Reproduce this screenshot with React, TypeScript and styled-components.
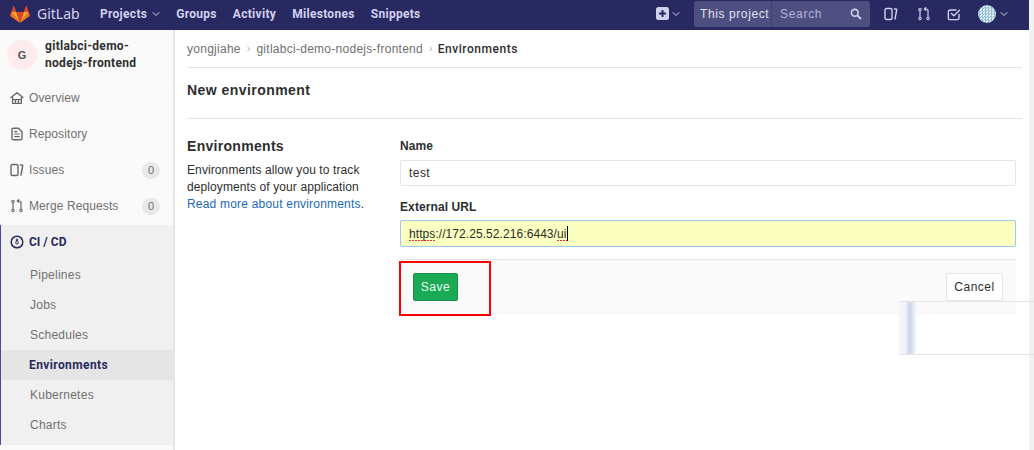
import React from "react";
import styled, { createGlobalStyle } from "styled-components";

const Global = createGlobalStyle`
  html, body { margin: 0; padding: 0; background: #fff; overflow: hidden; }
  body { font-family: "Liberation Sans", Arial, sans-serif; font-size: 12px; color: #2e2e2e; }
  * { box-sizing: border-box; }
`;

const Page = styled.div`
  position: relative;
  width: 1034px;
  height: 450px;
  overflow: hidden;
`;

const TopBar = styled.header`
  display: flex;
  align-items: center;
  height: 30px;
  padding: 0 5px 3px 10px;
  background: #292961;
`;

const Brand = styled.div`
  display: flex;
  align-items: center;
  gap: 7px;
  width: 90px;
  color: #d1d1f0;
  font-family: "Noto Sans", sans-serif;
  font-size: 14px;
`;

const NavItem = styled.span`
  display: inline-flex;
  align-items: center;
  gap: 5px;
  margin-right: 16px;
  color: #d1d1f0;
  font-family: Roboto, sans-serif;
  font-size: 12px;
  font-weight: 700;
  letter-spacing: 0.3px;
`;

const Spacer = styled.div`
  flex: 1;
`;

const SearchBox = styled.div`
  display: flex;
  width: 176px;
  height: 26px;
  margin: 0 14px;
  border-radius: 3px;
  background: #4e4e80;
  color: #d1d1f0;
  font-size: 12px;
`;

const Scope = styled.div`
  display: flex;
  align-items: center;
  width: 78px;
  padding-left: 6px;
  border-right: 1px solid #3e3e74;
  letter-spacing: 0.6px;
  color: #e1e1f5;
`;

const SearchField = styled.div`
  display: flex;
  flex: 1;
  align-items: center;
  justify-content: space-between;
  padding: 0 8px;
  letter-spacing: 0.7px;
  color: #b5b5d8;
`;

const BarIcon = styled.span<{ $after?: number; $before?: number }>`
  display: inline-flex;
  margin-left: ${(p) => p.$before ?? 0}px;
  margin-right: ${(p) => p.$after ?? 0}px;
  color: #d1d1f0;
`;

const Avatar = styled.span`
  width: 18px;
  height: 18px;
  border-radius: 50%;
  background: repeating-conic-gradient(#8fc0d6 0 25%, #e4eef3 0 50%) 0 0 / 3px 3px;
`;

const Body = styled.div`
  display: flex;
  height: 420px;
`;

const Side = styled.aside`
  display: flex;
  flex-direction: column;
  flex: none;
  width: 175px;
  border-right: 2px solid #e5e5e5;
  background: #fafafa;
`;

const ProjectHead = styled.div`
  display: flex;
  align-items: center;
  gap: 8px;
  height: 50px;
  padding: 0 7px;
`;

const ProjectBadge = styled.div`
  display: flex;
  flex: none;
  align-items: center;
  justify-content: center;
  width: 30px;
  height: 30px;
  border-radius: 50%;
  background: #ffebee;
  color: #555;
  font-size: 11px;
  font-weight: 700;
`;

const ProjectName = styled.div`
  color: #2e2e2e;
  font-family: Roboto, sans-serif;
  font-size: 12px;
  font-weight: 700;
  line-height: 17px;
  letter-spacing: 0.3px;
`;

const SideRow = styled.div`
  display: flex;
  align-items: center;
  height: 36px;
  padding: 0 13px 0 10px;
  color: #707070;
  letter-spacing: 0.1px;
`;

const SideIcon = styled.span`
  display: inline-flex;
  width: 19px;
  color: #666;
`;

const Count = styled.span`
  display: flex;
  align-items: center;
  justify-content: center;
  width: 18px;
  height: 17px;
  margin-left: auto;
  border-radius: 9px;
  background: #e8e8e8;
  color: #707070;
  font-size: 11px;
  letter-spacing: 0;
`;

const CiGroup = styled.div`
  height: 220px;
  margin-top: 1px;
  border-left: 1px solid #4b4ba3;
  background: #f0f0f0;
`;

const CiHead = styled.div`
  display: flex;
  align-items: center;
  height: 35px;
  padding: 0 0 1px 9px;
  color: #292961;
  font-family: Roboto, sans-serif;
  font-weight: 700;
`;

const SubRow = styled.div<{ $active?: boolean }>`
  display: flex;
  align-items: center;
  height: 30px;
  padding-left: ${(p) => (p.$active ? "28px" : "29px")};
  background: ${(p) => (p.$active ? "#e5e5e5" : "transparent")};
  color: ${(p) => (p.$active ? "#292961" : "#707070")};
  font-family: ${(p) => (p.$active ? "Roboto, sans-serif" : "inherit")};
  font-weight: ${(p) => (p.$active ? 700 : 400)};
  letter-spacing: ${(p) => (p.$active ? "0.4px" : "0.25px")};
`;

const Main = styled.main`
  flex: 1;
  padding: 0 12px;
`;

const Crumbs = styled.div`
  display: flex;
  align-items: center;
  gap: 6px;
  height: 38px;
  border-bottom: 1px solid #e5e5e5;
  color: #707070;
  letter-spacing: 0.27px;
`;

const CrumbSep = styled.span`
  color: #aaa;
  font-size: 10px;
`;

const CrumbNow = styled.span`
  margin-left: -1px;
  color: #2e2e2e;
  font-family: Roboto, sans-serif;
  font-weight: 500;
  letter-spacing: 0.55px;
`;

const Title = styled.h3`
  display: flex;
  align-items: center;
  height: 51px;
  margin: 0;
  padding-bottom: 7px;
  border-bottom: 1px solid #e5e5e5;
  color: #2e2e2e;
  font-size: 14px;
  font-weight: 700;
  letter-spacing: 0.45px;
`;

const Columns = styled.div`
  display: grid;
  grid-template-columns: 213px 616px;
  padding-top: 18px;
`;

const Intro = styled.div`
  line-height: 17px;
  letter-spacing: 0.1px;
`;

const IntroTitle = styled.h4`
  margin: 0 0 7px;
  color: #2e2e2e;
  font-size: 14px;
  font-weight: 700;
  line-height: 18px;
  letter-spacing: 0.3px;
`;

const DocLink = styled.a`
  color: #1b69b6;
  text-decoration: none;
  letter-spacing: 0.2px;
`;

const FieldLabel = styled.label<{ $tight?: boolean }>`
  display: block;
  margin-bottom: ${(p) => (p.$tight ? "4px" : "5px")};
  color: #2e2e2e;
  font-size: 12px;
  font-weight: 700;
  line-height: 18px;
  letter-spacing: 0.1px;
`;

const Field = styled.div<{ $filled?: boolean }>`
  display: flex;
  align-items: center;
  height: ${(p) => (p.$filled ? "27px" : "26px")};
  margin-bottom: 12px;
  padding: 0 8px;
  border: 1px solid ${(p) => (p.$filled ? "#9ec7ec" : "#e5e5e5")};
  border-radius: 2px;
  background: ${(p) => (p.$filled ? "#fbffc0" : "#fff")};
  color: #2e2e2e;
  letter-spacing: ${(p) => (p.$filled ? "0.07px" : "0.45px")};
`;

const Typo = styled.span`
  background: repeating-linear-gradient(90deg, #e33 0 2px, transparent 2px 3px) left bottom / 100% 1px no-repeat;
`;

const Caret = styled.span`
  width: 1px;
  height: 15px;
  background: #000;
`;

const Actions = styled.div`
  display: flex;
  align-items: center;
  justify-content: space-between;
  height: 56px;
  padding: 0 13px 1px;
  border-top: 1px solid #e5e5e5;
  background: #fafafa;
`;

const Button = styled.button<{ $primary?: boolean }>`
  height: 28px;
  padding: 0;
  width: ${(p) => (p.$primary ? "45px" : "57px")};
  border: 1px solid ${(p) => (p.$primary ? "#168f48" : "#e5e5e5")};
  border-radius: 2px;
  background: ${(p) => (p.$primary ? "#1aaa55" : "#fff")};
  color: ${(p) => (p.$primary ? "#e8fff0" : "#2e2e2e")};
  font-family: inherit;
  font-size: 12px;
  letter-spacing: 0.5px;
`;

const RedMark = styled.div`
  position: absolute;
  left: 399px;
  top: 261px;
  width: 92px;
  height: 55px;
  border: 2px solid #f00;
`;

const Ghost = styled.div`
  position: absolute;
  left: 899px;
  top: 301px;
  width: 135px;
  height: 54px;
  border-top: 1px solid #e0e4ec;
  border-bottom: 1px solid #e0e4ec;
  background: linear-gradient(90deg, #f6f7f9 0, #eef1f5 7px, #cdd9e8 10px, #cfdaea 12px, #e8edf4 15px, rgba(255, 255, 255, 0) 18px);
`;

const ScrollTrack = styled.div`
  position: absolute;
  right: 0;
  top: 0;
  width: 5px;
  height: 450px;
  background: #f1f1f1;
`;

const stroke = { fill: "none", stroke: "currentColor", strokeWidth: 1.4, strokeLinecap: "round", strokeLinejoin: "round" } as const;

const Chevron = () => (
  <svg width="8" height="6" viewBox="0 0 8 6">
    <path d="M1 1.5 4 4.5 7 1.5" {...stroke} strokeWidth={1} />
  </svg>
);

const Logo = () => (
  <svg width="20" height="18" viewBox="0 0 20 18">
    <path d="M10 18 .6 11.2a.8.8 0 0 1-.3-.9L1.4 7z" fill="#fc6d26" />
    <path d="M10 18 18.6 7l1.1 3.3a.8.8 0 0 1-.3.9z" fill="#fc6d26" />
    <path d="M10 18 1.4 7h5z" fill="#fca326" />
    <path d="M10 18l8.6-11h-5z" fill="#fca326" />
    <path d="M10 18 6.4 7h7.2z" fill="#e24329" />
    <path d="M1.4 7 3.3.9c.1-.3.6-.3.7 0L6.4 7zM18.6 7 16.7.9c-.1-.3-.6-.3-.7 0L13.6 7z" fill="#e24329" />
  </svg>
);

const IssuesIcon = () => (
  <svg width="14" height="14" viewBox="0 0 14 14">
    <rect x="1" y="1.5" width="7" height="11" rx="1.5" {...stroke} />
    <path d="M10.5 2H12c.5 0 .8.4.7.9L11 12" {...stroke} />
  </svg>
);

const MergeIcon = () => (
  <svg width="14" height="14" viewBox="0 0 14 14">
    <circle cx="3" cy="11.5" r="1.2" {...stroke} strokeWidth={1.1} />
    <circle cx="11" cy="11.5" r="1.2" {...stroke} strokeWidth={1.1} />
    <circle cx="3" cy="2.5" r="1.2" {...stroke} strokeWidth={1.1} />
    <path d="M3 4v6M11 10V3.5C11 2.6 10.4 2 9.5 2H7.5M8.8.6 7.3 2l1.5 1.4" {...stroke} strokeWidth={1.2} />
  </svg>
);

const TodoIcon = () => (
  <svg width="14" height="14" viewBox="0 0 14 14">
    <path d="M12 7.5V11a1.6 1.6 0 0 1-1.6 1.6H3A1.6 1.6 0 0 1 1.4 11V4.6A1.6 1.6 0 0 1 3 3h6" {...stroke} />
    <path d="M4.5 6.5 6.8 8.8 12.5 3.2" {...stroke} />
  </svg>
);

const PlusIcon = () => (
  <svg width="13" height="13" viewBox="0 0 13 13">
    <rect width="13" height="13" rx="2.5" fill="#d1d1f0" />
    <path d="M6.5 3v7M3 6.5h7" stroke="#292961" strokeWidth="2" />
  </svg>
);

const SearchIcon = () => (
  <svg width="12" height="12" viewBox="0 0 12 12">
    <circle cx="4.8" cy="4.8" r="3.4" fill="none" stroke="#d1d1f0" strokeWidth="1.6" />
    <path d="M7.4 7.4 11 11" stroke="#d1d1f0" strokeWidth="1.8" />
  </svg>
);

const HomeIcon = () => (
  <svg width="14" height="14" viewBox="0 0 14 14">
    <path d="M1 6.5 7 1.8l6 4.7" {...stroke} />
    <path d="M2.6 6v6.4h8.8V6M5.5 12.4V8.6h3v3.8M2.6 8.6h8.8" {...stroke} strokeWidth={1.2} />
  </svg>
);

const RepoIcon = () => (
  <svg width="14" height="14" viewBox="0 0 14 14">
    <path d="M8.5 1.2H3.4A1.4 1.4 0 0 0 2 2.6v8.8a1.4 1.4 0 0 0 1.4 1.4h7.2a1.4 1.4 0 0 0 1.4-1.4V4.8z" {...stroke} />
    <path d="M4.6 7h4.8M4.6 9.6h4.8M4.6 4.6h2.4" {...stroke} strokeWidth={1.1} />
  </svg>
);

const GaugeIcon = () => (
  <svg width="14" height="14" viewBox="0 0 14 14">
    <circle cx="7" cy="7" r="5.8" fill="none" stroke="#292961" strokeWidth="1.5" />
    <path d="M7 3.8 8.2 7.4a1.25 1.25 0 1 1-2.4 0z" fill="none" stroke="#292961" strokeWidth="1" />
  </svg>
);

export default function App() {
  return (
    <Page>
      <Global />
      <TopBar>
        <Brand>
          <Logo />
          GitLab
        </Brand>
        <NavItem>
          Projects <Chevron />
        </NavItem>
        <NavItem>Groups</NavItem>
        <NavItem>Activity</NavItem>
        <NavItem>Milestones</NavItem>
        <NavItem>Snippets</NavItem>
        <Spacer />
        <PlusIcon />
        <BarIcon $before={3}>
          <Chevron />
        </BarIcon>
        <SearchBox>
          <Scope>This project</Scope>
          <SearchField>
            Search
            <SearchIcon />
          </SearchField>
        </SearchBox>
        <BarIcon $after={19}>
          <IssuesIcon />
        </BarIcon>
        <BarIcon $after={16}>
          <MergeIcon />
        </BarIcon>
        <BarIcon $after={17}>
          <TodoIcon />
        </BarIcon>
        <Avatar />
        <BarIcon $before={4} $after={21}>
          <Chevron />
        </BarIcon>
      </TopBar>
      <Body>
        <Side>
          <ProjectHead>
            <ProjectBadge>G</ProjectBadge>
            <ProjectName>
              gitlabci-demo-
              <br />
              nodejs-frontend
            </ProjectName>
          </ProjectHead>
          <SideRow>
            <SideIcon>
              <HomeIcon />
            </SideIcon>
            Overview
          </SideRow>
          <SideRow>
            <SideIcon>
              <RepoIcon />
            </SideIcon>
            Repository
          </SideRow>
          <SideRow>
            <SideIcon>
              <IssuesIcon />
            </SideIcon>
            Issues
            <Count>0</Count>
          </SideRow>
          <SideRow>
            <SideIcon>
              <MergeIcon />
            </SideIcon>
            Merge Requests
            <Count>0</Count>
          </SideRow>
          <CiGroup>
            <CiHead>
              <SideIcon>
                <GaugeIcon />
              </SideIcon>
              CI / CD
            </CiHead>
            <SubRow>Pipelines</SubRow>
            <SubRow>Jobs</SubRow>
            <SubRow>Schedules</SubRow>
            <SubRow $active>Environments</SubRow>
            <SubRow>Kubernetes</SubRow>
            <SubRow>Charts</SubRow>
          </CiGroup>
        </Side>
        <Main>
          <Crumbs>
            <span>yongjiahe</span>
            <CrumbSep>›</CrumbSep>
            <span>gitlabci-demo-nodejs-frontend</span>
            <CrumbSep>›</CrumbSep>
            <CrumbNow>Environments</CrumbNow>
          </Crumbs>
          <Title>New environment</Title>
          <Columns>
            <Intro>
              <IntroTitle>Environments</IntroTitle>
              Environments allow you to track
              <br />
              deployments of your application
              <br />
              <DocLink>Read more about environments</DocLink>.
            </Intro>
            <div>
              <FieldLabel>Name</FieldLabel>
              <Field>test</Field>
              <FieldLabel $tight>External URL</FieldLabel>
              <Field $filled>
                <Typo>https</Typo>://172.25.52.216:6443/<Typo>ui</Typo>
                <Caret />
              </Field>
              <Actions>
                <Button $primary>Save</Button>
                <Button>Cancel</Button>
              </Actions>
            </div>
          </Columns>
        </Main>
      </Body>
      <ScrollTrack />
      <Ghost />
      <RedMark />
    </Page>
  );
}
